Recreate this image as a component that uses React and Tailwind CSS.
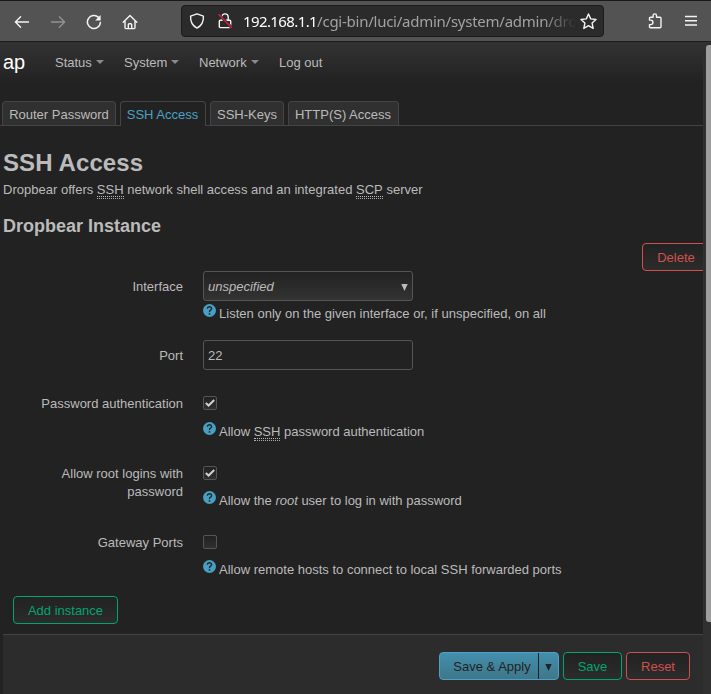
import React from "react";

function Caret() {
  return (
    <svg width="8" height="4" viewBox="0 0 8 4" className="ml-1 mb-px shrink-0">
      <path d="M0 0h8L4 4z" fill="#8a8a8a" />
    </svg>
  );
}

function Toolbar() {
  return (
    <div className="flex h-[42px] items-center border-t border-b border-t-[#19191b] border-b-[#1c1c1c] bg-[#535353] pl-[14px] pr-[14px] text-[#f4f4f4]">
      <svg width="16" height="16" viewBox="0 0 16 16" fill="none" stroke="currentColor" strokeWidth="1.4" strokeLinecap="round" strokeLinejoin="round" className="mt-px shrink-0">
        <path d="M14.5 8H1.6M6.6 2.8 1.4 8l5.2 5.2" />
      </svg>
      <svg width="16" height="16" viewBox="0 0 16 16" fill="none" stroke="#929292" strokeWidth="1.4" strokeLinecap="round" strokeLinejoin="round" className="ml-[20px] mt-px shrink-0">
        <path d="M1.5 8h12.9M9.4 2.8 14.6 8l-5.2 5.2" />
      </svg>
      <svg width="16" height="16" viewBox="0 0 16 16" fill="none" stroke="currentColor" strokeWidth="1.5" strokeLinecap="round" className="ml-[20px] mt-px shrink-0">
        <path d="M14.4 8.6A6.5 6.5 0 1 1 12.5 3.4" />
        <path d="M14.6 1v5.4H9.2z" fill="currentColor" stroke="none" />
      </svg>
      <svg width="16" height="16" viewBox="0 0 16 16" fill="none" stroke="currentColor" strokeWidth="1.4" strokeLinecap="round" strokeLinejoin="round" className="ml-[19.5px] mt-px shrink-0">
        <path d="M1.2 8.2 8 1.4l6.8 6.8M3 7v6.6q0 1 1 1h8q1 0 1-1V7" />
        <path d="M6.3 14.4V10.7q0-.9.9-.9h1.6q.9 0 .9.9v3.7" />
      </svg>
      <div className="ml-[43.5px] flex h-[32px] w-[423px] shrink-0 items-center rounded-[4px] border border-[#1b1b1b] bg-[#2b2b2b] pl-[7px]">
        <svg width="16" height="16" viewBox="0 0 16 16" fill="none" stroke="currentColor" strokeWidth="1.4" strokeLinejoin="round" className="shrink-0">
          <path d="M8 .9 14.4 3.2c.3 5.4-1.6 9.3-6.4 11.9C3.200 12.500 1.300 8.600 1.600 3.200z" />
        </svg>
        <svg width="16" height="16" viewBox="0 0 16 16" fill="none" stroke="currentColor" strokeWidth="1.4" strokeLinejoin="round" className="ml-[12px] shrink-0">
          <path d="M4.800 7V4.100a3.200 3.200 0 0 1 6.400 0V7M3.300 7.200h9.400q1 0 1 1v5.400q0 1-1 1H3.300q-1 0-1-1V8.200q0-1 1-1z" />
          <path d="M1.500 1.200 14.800 14.800" stroke="#2b2b2b" strokeWidth="3" />
          <path d="M1.500 1.200 14.800 14.800" stroke="#dd1e45" strokeWidth="1.4" />
        </svg>
        <div className="ml-[10px] w-[333px] shrink-0 whitespace-nowrap font-['Noto_Sans',sans-serif] text-[15px] leading-[22px] text-[#a2a2a2] [mask-image:linear-gradient(to_right,black_300px,transparent_333px)]">
          <span className="tracking-[-0.6px] text-white">192.168.1.1</span>
          <span className="tracking-[-0.25px]">/cgi-bin/luci/admin/system/admin/dro</span>
        </div>
        <svg width="17" height="17" viewBox="0 0 17 17" fill="none" stroke="currentColor" strokeWidth="1.4" strokeLinejoin="round" className="ml-[4px] shrink-0">
          <path d="m8.500 1 2.200 4.900 5.300.6-3.900 3.600 1.100 5.300-4.700-2.700-4.700 2.700 1.100-5.300L1 6.500l5.300-.6z" />
        </svg>
      </div>
      <svg width="16" height="16" viewBox="0 0 16 16" fill="none" stroke="currentColor" strokeWidth="1.4" strokeLinejoin="round" className="ml-[43px] shrink-0">
        <path d="M2.500 7V5.300q0-1 1-1h2.600V2.600a1.700 1.700 0 0 1 3.400 0v1.700h3.500q1 0 1 1v8.500q0 1-1 1H3.500q-1 0-1-1v-2.200h1.200a2.200 2.200 0 0 0 0-4.500z" />
      </svg>
      <svg width="12" height="12" viewBox="0 0 12 12" stroke="currentColor" strokeWidth="1.4" className="ml-auto shrink-0">
        <path d="M0 1.500h12M0 5.800h12M0 10h12" />
      </svg>
    </div>
  );
}

function Tab({ children, className, active }) {
  return (
    <div
      className={`flex items-center justify-center whitespace-nowrap rounded-t-[4px] border border-b-0 border-[#444] ${
        active ? "h-[25px] bg-[#222] pt-px pr-px text-[#4ba1c6]" : "h-[24px] bg-[#303030] pt-[2px]"
      } ${className}`}
    >
      {children}
    </div>
  );
}

function Help({ children, className }) {
  return (
    <div className={`flex h-[18px] whitespace-nowrap ${className}`}>
      <svg width="13" height="13" viewBox="0 0 13 13" className="mr-[3px] shrink-0">
        <circle cx="6.5" cy="6.5" r="6.5" fill="#499fc2" />
        <path d="M4.400 4.800Q4.500 2.800 6.500 2.800T8.600 4.700Q8.600 5.500 7.500 6.200T6.500 8.100" fill="none" stroke="#202a30" strokeWidth="1.400" />
        <path d="M5.700 9.200h1.600v1.500H5.700z" fill="#202a30" />
      </svg>
      <span className="pt-px leading-[18px]">{children}</span>
    </div>
  );
}

function Abbr({ children }) {
  return (
    <span className="inline-block h-[18px] border-b border-dotted border-[#aaa] align-top leading-[18px]">
      <span className="block h-[16px] border-b border-dotted border-[#bbb]">{children}</span>
    </span>
  );
}

function Row({ label, className, labelClass, children }) {
  return (
    <div className={`flex ${className}`}>
      <div className={`w-[180px] shrink-0 text-right leading-[18px] ${labelClass}`}>{label}</div>
      <div className="ml-5 flex flex-col items-start">{children}</div>
    </div>
  );
}

function Checkbox({ checked }) {
  return (
    <div className="flex h-[14px] w-[14px] items-center justify-center rounded-[2px] border border-[#555] bg-linear-to-b from-[#222] to-[#303030]">
      {checked && (
        <svg width="10" height="8" viewBox="0 0 10 8" fill="none">
          <path d="M.8 3.900 3.600 6.500 9.200 1" stroke="#d0d0d0" strokeWidth="2" />
        </svg>
      )}
    </div>
  );
}

function Button({ children, className }) {
  return (
    <div className={`flex h-7 items-center justify-center whitespace-nowrap rounded-[4px] border bg-linear-to-b from-[#222] to-[#2c2c2c] pt-px ${className}`}>
      {children}
    </div>
  );
}

export default function App() {
  return (
    <div className="h-[694px] w-[711px] overflow-hidden bg-[#222] font-['Liberation_Sans',Arial,sans-serif] text-[13px] text-[#bbb]">
      <Toolbar />
      <div className="flex h-[652px]">
        <div className="flex w-[703px] shrink-0 flex-col overflow-hidden">
          <div className="flex h-[41px] shrink-0 items-center bg-linear-to-b from-[#333] to-[#222] pl-[3px]">
            <span className="w-[52px] pb-[2px] text-[20px] text-white">ap</span>
            <span className="flex w-[69px] items-center">Status<Caret /></span>
            <span className="flex w-[75px] items-center">System<Caret /></span>
            <span className="flex w-[80px] items-center">Network<Caret /></span>
            <span>Log out</span>
          </div>
          <div className="mt-[18px] flex h-[25px] shrink-0 items-start gap-1 border-b border-[#444] pl-[2px]">
            <Tab className="w-[114px]">Router Password</Tab>
            <Tab className="w-[86px]" active>SSH Access</Tab>
            <Tab className="w-[74px]">SSH-Keys</Tab>
            <Tab className="w-[111px] pr-px">HTTP(S) Access</Tab>
          </div>
          <div className="flex flex-1 flex-col pl-[3px]">
            <h2 className="mt-[19px] h-[36px] text-[24px] font-bold leading-[36px] tracking-[0.1px]">SSH Access</h2>
            <p className="h-[18px] whitespace-nowrap leading-[18px] tracking-[0.01px]">
              Dropbear offers <Abbr>SSH</Abbr> network shell access and an integrated <Abbr>SCP</Abbr> server
            </p>
            <h3 className="mt-[9px] h-[35px] text-[18px] font-bold leading-[36px]">Dropbear Instance</h3>
            <div className="flex h-7 shrink-0 pl-[639px]">
              <Button className="w-[70px] shrink-0 border-[#d04f4f] pr-[2px] text-[#d04f4f]">Delete</Button>
            </div>
            <Row label="Interface" labelClass="pt-[7px]" className="h-[69px]">
              <div className="flex h-[30px] w-[210px] items-center justify-between rounded-[3px] border border-[#555] bg-linear-to-b from-[#222] to-[#333] pl-1 pr-1">
                <em className="pt-px">unspecified</em>
                <svg width="7" height="7" viewBox="0 0 7 7" className="mt-[2px]"><path d="M.3 0h6.400L3.500 7z" fill="#bbb" /></svg>
              </div>
              <Help className="mt-[3px] tracking-[0.015px]">Listen only on the given interface or, if unspecified, on all</Help>
            </Row>
            <Row label="Port" labelClass="pt-[7px]" className="h-[56px]">
              <div className="flex h-[30px] w-[210px] items-center rounded-[3px] border border-[#555] pl-1 pt-px">22</div>
            </Row>
            <Row label="Password authentication" labelClass="-mt-px" className="h-[70px]">
              <Checkbox checked />
              <Help className="mt-[12px]">Allow <Abbr>SSH</Abbr> password authentication</Help>
            </Row>
            <Row label="Allow root logins with password" labelClass="-mt-px pl-[50px]" className="h-[69px]">
              <Checkbox checked />
              <Help className="mt-[11px]">Allow the <em>root</em> user to log in with password</Help>
            </Row>
            <Row label="Gateway Ports" labelClass="-mt-px" className="h-[61px]">
              <Checkbox />
              <Help className="mt-[11px]">Allow remote hosts to connect to local SSH forwarded ports</Help>
            </Row>
            <Button className="ml-[10px] w-[105px] shrink-0 border-[#00a56f] text-[#00a56f]">Add instance</Button>
            <div className="mt-[10px] flex flex-1 items-start justify-end gap-1 border-t border-[#444] bg-[#2c2c2c] pr-[13px] pt-[17px]">
              <div className="flex h-7 w-[120px] overflow-hidden rounded-[4px] border border-[#4ba1c6] bg-linear-to-b from-[#438fae] to-[#3e7789] text-[#222]">
                <div className="flex flex-1 items-center justify-center border-r border-[#222] pt-px pl-[6px]">Save &amp; Apply</div>
                <div className="flex w-[19px] items-center justify-center pt-[2px]">
                  <svg width="7" height="7" viewBox="0 0 7 7"><path d="M.3 0h6.400L3.500 7z" fill="#222" /></svg>
                </div>
              </div>
              <Button className="w-[59px] border-[#00a56f] text-[#00a56f]">Save</Button>
              <Button className="w-[64px] border-[#d04f4f] text-[#d04f4f]">Reset</Button>
            </div>
          </div>
        </div>
        <div className="w-[8px] bg-[#303030] pl-[3px] pt-[3px]">
          <div className="h-[577px] rounded-l-[3px] bg-[#9e9e9e]" />
        </div>
      </div>
    </div>
  );
}
